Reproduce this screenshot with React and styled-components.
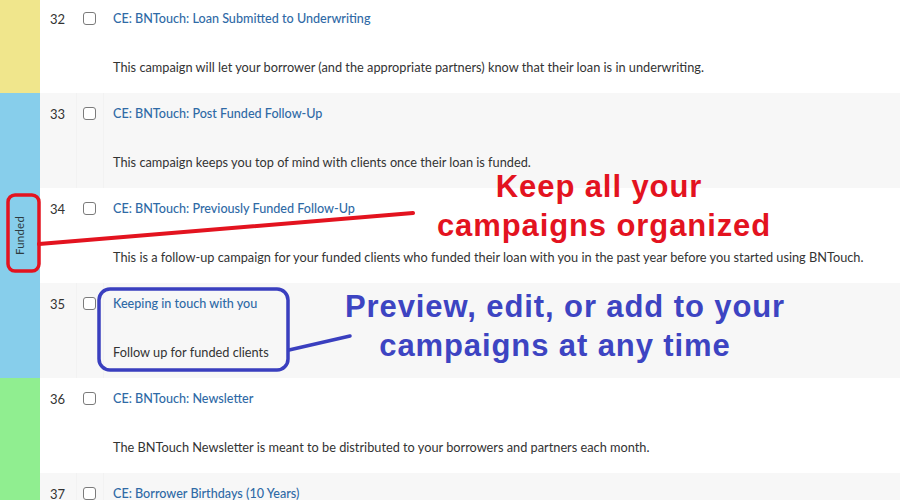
import React from "react";
import styled, { createGlobalStyle } from "styled-components";

const Global = createGlobalStyle`
  html, body { margin: 0; padding: 0; background: #fff; }
  body { font-family: Lato, "Open Sans", sans-serif; color: #333; }
  #root { width: 900px; height: 500px; overflow: hidden; }
`;

const Page = styled.div`
  position: relative;
  width: 900px;
  height: 500px;
  overflow: hidden;
`;

const Table = styled.div`
  display: flex;
  flex-direction: column;
  margin-top: -2px;
`;

const Group = styled.div`
  display: flex;
`;

const Strip = styled.div`
  width: 40px;
  flex: none;
  background: ${(p) => p.$color};
  display: flex;
  align-items: center;
  justify-content: center;
`;

const StripLabel = styled.span`
  transform: rotate(-90deg);
  font-size: 11.5px;
  color: #2d3b40;
  white-space: nowrap;
  letter-spacing: 0.2px;
`;

const Rows = styled.div`
  flex: 1;
  display: flex;
  flex-direction: column;
`;

const Row = styled.div`
  height: 95px;
  display: flex;
  background: ${(p) => (p.$alt ? "#f7f7f7" : "#fff")};
`;

const NumCell = styled.div`
  width: 37px;
  padding: 13px 0 0 10px;
  box-sizing: border-box;
  font-size: 13px;
  line-height: 16px;
  color: #333;
  border-right: 1px solid ${(p) => (p.$alt ? "#f2f2f2" : "transparent")};
`;

const CheckCell = styled.div`
  width: 27px;
  box-sizing: border-box;
  padding: 14px 0 0 6px;
  border-right: 1px solid ${(p) => (p.$alt ? "#f2f2f2" : "transparent")};
`;

const Box = styled.div`
  width: 11px;
  height: 11px;
  border: 1px solid #7b7b7b;
  border-radius: 3px;
  background: #fff;
`;

const Content = styled.div`
  flex: 1;
  padding: 12px 0 0 9px;
  display: flex;
  flex-direction: column;
  gap: 32px;
`;

const Title = styled.a`
  font-size: 12.6px;
  line-height: 17px;
  color: #2f6aa6;
  font-weight: 500;
  text-decoration: none;
`;

const Desc = styled.div`
  font-size: 12.75px;
  line-height: 17px;
  color: #333;
`;

const Overlay = styled.svg`
  position: absolute;
  left: 0;
  top: 0;
  pointer-events: none;
`;

const Callout = styled.div`
  position: absolute;
  left: ${(p) => p.$x}px;
  top: ${(p) => p.$y}px;
  width: ${(p) => p.$w}px;
  display: flex;
  flex-direction: column;
  align-items: center;
  font-family: "Liberation Sans", Arial, sans-serif;
  font-weight: 700;
  font-size: 31px;
  line-height: 39px;
  color: ${(p) => p.$color};
  letter-spacing: 0.9px;
  white-space: nowrap;
`;

const CalloutLine = styled.span`
  transform: translateX(${(p) => p.$shift || 0}px);
`;

const data = [
  {
    color: "#f0e68c",
    label: "",
    rows: [
      {
        n: 32,
        t: "CE: BNTouch: Loan Submitted to Underwriting",
        d: "This campaign will let your borrower (and the appropriate partners) know that their loan is in underwriting.",
      },
    ],
  },
  {
    color: "#87ceeb",
    label: "Funded",
    rows: [
      {
        n: 33,
        t: "CE: BNTouch: Post Funded Follow-Up",
        d: "This campaign keeps you top of mind with clients once their loan is funded.",
      },
      {
        n: 34,
        t: "CE: BNTouch: Previously Funded Follow-Up",
        d: "This is a follow-up campaign for your funded clients who funded their loan with you in the past year before you started using BNTouch.",
      },
      { n: 35, t: "Keeping in touch with you", d: "Follow up for funded clients" },
    ],
  },
  {
    color: "#90ee90",
    label: "",
    rows: [
      {
        n: 36,
        t: "CE: BNTouch: Newsletter",
        d: "The BNTouch Newsletter is meant to be distributed to your borrowers and partners each month.",
      },
      { n: 37, t: "CE: Borrower Birthdays (10 Years)", d: "" },
    ],
  },
];

export default function App() {
  return (
    <Page>
      <Global />
      <Table>
        {data.map((g, gi) => (
          <Group key={gi}>
            <Strip $color={g.color}>{g.label && <StripLabel>{g.label}</StripLabel>}</Strip>
            <Rows>
              {g.rows.map((r) => {
                const alt = r.n % 2 === 1;
                return (
                  <Row key={r.n} $alt={alt}>
                    <NumCell $alt={alt}>{r.n}</NumCell>
                    <CheckCell $alt={alt}>
                      <Box />
                    </CheckCell>
                    <Content>
                      <Title href="#">{r.t}</Title>
                      {r.d && <Desc>{r.d}</Desc>}
                    </Content>
                  </Row>
                );
              })}
            </Rows>
          </Group>
        ))}
      </Table>
      <Overlay width="900" height="500" viewBox="0 0 900 500">
        <rect x="8" y="195" width="31" height="76" rx="7" fill="none" stroke="#e3131f" strokeWidth="3.5" />
        <path d="M39 244 L413 213" stroke="#e3131f" strokeWidth="4" strokeLinecap="round" />
        <rect x="99" y="289" width="189" height="81" rx="11" fill="none" stroke="#3a3fbf" strokeWidth="3.5" />
        <path d="M289 350 L350 336" stroke="#3a3fbf" strokeWidth="3.5" strokeLinecap="round" />
      </Overlay>
      <Callout $x={392} $y={167} $w={420} $color="#e3131f">
        <CalloutLine $shift={-3}>Keep all your</CalloutLine>
        <CalloutLine $shift={2}>campaigns organized</CalloutLine>
      </Callout>
      <Callout $x={330} $y={287} $w={470} $color="#3d44c2">
        <CalloutLine>Preview, edit, or add to your</CalloutLine>
        <CalloutLine $shift={-10}>campaigns at any time</CalloutLine>
      </Callout>
    </Page>
  );
}
